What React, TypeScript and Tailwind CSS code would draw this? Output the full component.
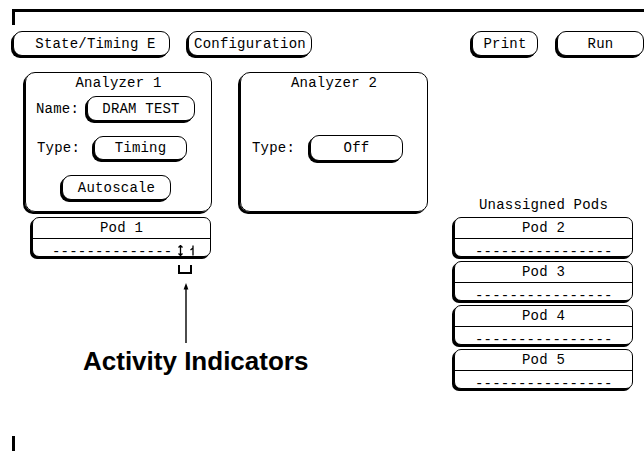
import React from "react";

function Btn({ className = "", children }: { className?: string; children: React.ReactNode }) {
  return (
    <div
      className={`flex items-center justify-center rounded-[9px] border border-black bg-white shadow-[-2px_2px_0_0_#000] whitespace-pre ${className}`}
    >
      <span>{children}</span>
    </div>
  );
}

function IndicatorA() {
  return (
    <svg width="9" height="11" viewBox="0 0 9 11" className="ml-[4px] shrink-0">
      <path d="M4.5 0.5V10.5M2.5 2.5L4.5 0.5L6.5 2.5M2.5 8.5L4.5 10.5L6.5 8.5" stroke="#000" strokeWidth="1.3" fill="none" />
    </svg>
  );
}

function IndicatorB() {
  return (
    <svg width="9" height="11" viewBox="0 0 9 11" className="ml-[3px] shrink-0">
      <path d="M5 0.5V10.5M5 3L2.5 5" stroke="#000" strokeWidth="1.3" fill="none" />
    </svg>
  );
}

function Pod({ name, className = "", active = false }: { name: string; className?: string; active?: boolean }) {
  return (
    <div
      className={`flex h-[40px] w-[179px] flex-col rounded-[7px] border border-black bg-white shadow-[-2px_2px_0_0_#000] ${className}`}
    >
      <div className="flex h-[21px] shrink-0 items-center justify-center border-b border-black">{name}</div>
      <div className={`flex items-start pt-[6px] ${active ? "pl-[19px]" : "pl-[20px]"}`}>
        {active ? (
          <>
            <span>--------------</span>
            <IndicatorA />
            <IndicatorB />
          </>
        ) : (
          <span>----------------</span>
        )}
      </div>
    </div>
  );
}

export default function App() {
  return (
    <div className="relative flex h-[451px] w-[644px] flex-col overflow-hidden bg-white font-['Liberation_Mono',monospace] text-[14px] leading-none tracking-[0.2px] text-black">
      {/* top frame corner */}
      <div className="ml-[12px] mt-[9px] h-[16px] border-l-[3px] border-t-[3px] border-black" />

      {/* button row */}
      <div className="mt-[6px] flex">
        <Btn className="ml-[13px] h-[25px] w-[157px] pl-[8px]">State/Timing E</Btn>
        <Btn className="ml-[18px] h-[25px] w-[124px]">Configuration</Btn>
        <Btn className="ml-[160px] h-[25px] w-[66px]">Print</Btn>
        <Btn className="ml-[19px] h-[25px] w-[87px] shrink-0">Run</Btn>
      </div>

      {/* main area */}
      <div className="mt-[16px] flex items-start">
        {/* left column */}
        <div className="ml-[25px] flex w-[187px] shrink-0 flex-col">
          <div className="flex h-[140px] w-[187px] flex-col rounded-[10px] border border-black shadow-[-2px_2px_0_0_#000]">
            <div className="mt-[2px] flex h-[16px] items-center justify-center">Analyzer 1</div>
            <div className="mt-[5px] flex items-center pl-[10px]">
              <span className="w-[51px]">Name:</span>
              <Btn className="h-[25px] w-[108px]">DRAM TEST</Btn>
            </div>
            <div className="mt-[15px] flex items-center pl-[11px]">
              <span className="w-[57px]">Type:</span>
              <Btn className="h-[24px] w-[93px]">Timing</Btn>
            </div>
            <div className="mt-[15px] flex pl-[36px]">
              <Btn className="h-[25px] w-[109px]">Autoscale</Btn>
            </div>
          </div>

          <Pod name="Pod 1" className="ml-[7px] mt-[5px]" active />

          <div className="ml-[153px] mt-[8px] h-[9px] w-[14px] border-2 border-t-0 border-black" />

          <svg width="12" height="60" viewBox="0 0 12 60" className="ml-[155px] mt-[9px]">
            <path d="M6 4V60" stroke="#000" strokeWidth="1.4" />
            <path d="M6 0L3.6 6.5H8.4Z" fill="#000" />
          </svg>

          <div className="ml-[58px] mt-[5px] whitespace-nowrap font-['Liberation_Sans',Arial,sans-serif] text-[26px] font-bold leading-none tracking-normal">
            Activity Indicators
          </div>
        </div>

        {/* middle column */}
        <div className="ml-[28px] flex h-[140px] w-[188px] shrink-0 flex-col rounded-[10px] border border-black shadow-[-2px_2px_0_0_#000]">
          <div className="mt-[2px] flex h-[16px] items-center justify-center">Analyzer 2</div>
          <div className="mt-[44px] flex items-center pl-[11px]">
            <span className="w-[58px]">Type:</span>
            <Btn className="h-[26px] w-[93px]">Off</Btn>
          </div>
        </div>

        {/* right column */}
        <div className="ml-[26px] flex w-[179px] shrink-0 flex-col">
          <div className="mt-[126px] flex h-[14px] items-center justify-center whitespace-nowrap">Unassigned Pods</div>
          <div className="mt-[5px] flex flex-col gap-[4px]">
            <Pod name="Pod 2" />
            <Pod name="Pod 3" />
            <Pod name="Pod 4" />
            <Pod name="Pod 5" />
          </div>
        </div>
      </div>

      {/* bottom-left frame mark */}
      <div className="ml-[12px] mt-auto h-[15px] w-[3px] shrink-0 bg-black" />
    </div>
  );
}
